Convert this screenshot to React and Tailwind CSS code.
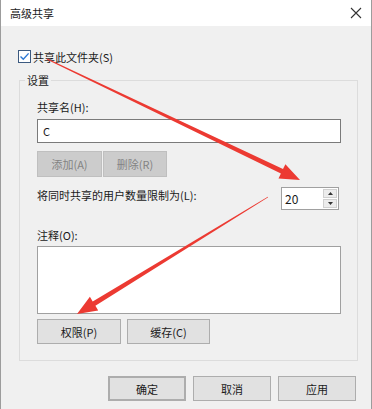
import React from 'react';

const font = { fontFamily: '"Noto Sans CJK SC", "Liberation Sans", sans-serif' };

// tapered arrow: thin at start, thick near the head
const arrowPoints = (sx, sy, tx, ty, w0, w1, headLen, headW) => {
  const dx = tx - sx;
  const dy = ty - sy;
  const len = Math.hypot(dx, dy);
  const ux = dx / len;
  const uy = dy / len;
  const nx = -uy;
  const ny = ux;
  const bx = tx - headLen * ux;
  const by = ty - headLen * uy;
  const p = (x, y) => `${x.toFixed(1)},${y.toFixed(1)}`;
  return [
    p(sx + w0 * nx, sy + w0 * ny),
    p(bx + w1 * nx, by + w1 * ny),
    p(bx + headW * nx, by + headW * ny),
    p(tx, ty),
    p(bx - headW * nx, by - headW * ny),
    p(bx - w1 * nx, by - w1 * ny),
    p(sx - w0 * nx, sy - w0 * ny),
  ].join(' ');
};

const Btn = ({ children, className = '' }) => (
  <div
    className={`flex h-[25px] items-center justify-center border border-[#adadad] bg-[#e1e1e1] text-[#1a1a1a] ${className}`}
  >
    {children}
  </div>
);

const DisabledBtn = ({ children, className = '' }) => (
  <div
    className={`flex h-[26px] items-center justify-center border border-[#bfbfbf] bg-[#cccccc] text-[#838383] ${className}`}
  >
    {children}
  </div>
);

export default function App() {
  return (
    <div
      className="relative h-[409px] w-[372px] overflow-hidden border-x border-[#9c9c9c] bg-[#f0f0f0] text-[11px] leading-4 text-[#1a1a1a]"
      style={font}
    >
      {/* title bar */}
      <div className="flex h-[26px] items-center justify-between bg-white pl-[9px] pr-[8px]">
        <span>高级共享</span>
        <svg width="12" height="12" viewBox="0 0 12 12" className="mr-[1px]">
          <path d="M1 1 L11 11 M11 1 L1 11" stroke="#333" strokeWidth="1.1" />
        </svg>
      </div>

      <div className="flex flex-col pl-[17px]">
        {/* share checkbox */}
        <div className="mt-[24px] flex h-[13px] items-center gap-[2px]">
          <div className="flex h-[13px] w-[13px] items-center justify-center border border-[#3c5a80] bg-white">
            <svg width="11" height="11" viewBox="0 0 11 11">
              <path d="M1.5 5.5 L4.3 8.3 L9.6 2.4" fill="none" stroke="#2d78d4" strokeWidth="1.4" />
            </svg>
          </div>
          <span>共享此文件夹(S)</span>
        </div>

        {/* settings group */}
        <fieldset className="ml-[1px] mt-[9px] w-[339px] border border-[#dcdcdc] pb-[16px] pl-[17px] pr-[16px]">
          <legend className="ml-[-12px] px-[2px] leading-4">设置</legend>

          <div className="mt-[11px]">共享名(H):</div>
          <div className="mt-[4px] flex h-[24px] items-center border border-[#7a7a7a] bg-white pl-[5px]">
            C
          </div>

          <div className="mt-[8px] flex gap-[1px]">
            <DisabledBtn className="w-[65px]">添加(A)</DisabledBtn>
            <DisabledBtn className="w-[64px]">删除(R)</DisabledBtn>
          </div>

          <div className="mt-[10px] flex items-start justify-between">
            <span>将同时共享的用户数量限制为(L):</span>
            <div className="mr-[2px] flex h-[23px] w-[58px] border border-[#a0a0a0] bg-white">
              <div className="flex flex-1 items-center pl-[3px] text-[12px]">20</div>
              <div className="flex w-[16px] flex-col gap-[1px] p-[1px]">
                <div className="flex flex-1 items-center justify-center border border-[#d0d0d0] bg-[#ececec]">
                  <svg width="5" height="3" viewBox="0 0 5 3">
                    <path d="M0 3 L2.5 0 L5 3 Z" fill="#333" />
                  </svg>
                </div>
                <div className="flex flex-1 items-center justify-center border border-[#d0d0d0] bg-[#ececec]">
                  <svg width="5" height="3" viewBox="0 0 5 3">
                    <path d="M0 0 L2.5 3 L5 0 Z" fill="#333" />
                  </svg>
                </div>
              </div>
            </div>
          </div>

          <div className="mt-[17px]">注释(O):</div>
          <div className="mt-[3px] h-[68px] border border-[#a0a0a0] bg-white" />

          <div className="mt-[5px] flex gap-[6px]">
            <Btn className="w-[84px]">权限(P)</Btn>
            <Btn className="w-[83px]">缓存(C)</Btn>
          </div>
        </fieldset>

        {/* dialog buttons */}
        <div className="mt-[15px] flex justify-end gap-[7px] pr-[15px]">
          <Btn className="w-[78px] border-2 border-[#3b8ad8]">确定</Btn>
          <Btn className="w-[78px]">取消</Btn>
          <Btn className="w-[78px]">应用</Btn>
        </div>
      </div>

      {/* red annotation arrows */}
      <svg
        className="pointer-events-none absolute left-[-1px] top-0"
        width="372"
        height="409"
        viewBox="0 0 372 409"
      >
        <polygon points={arrowPoints(47, 59, 300, 180, 0.5, 2.5, 20, 8)} fill="#ec3a32" />
        <polygon points={arrowPoints(268, 197, 77, 314, 0.4, 2.5, 20, 8)} fill="#ec3a32" />
      </svg>
    </div>
  );
}
